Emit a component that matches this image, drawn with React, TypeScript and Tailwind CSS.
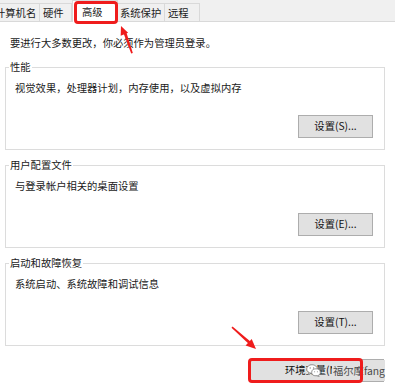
import React from "react";

const tabs = [
	{ label: "计算机名", cls: "ml-[-5px] w-[45px] pl-0" },
	{ label: "硬件", cls: "w-[32px] pl-[3px]" },
	{ label: "高级", cls: "w-[46px] pl-[9px]", active: true },
	{ label: "系统保护", cls: "w-[47px] pl-[2px]" },
	{ label: "远程", cls: "w-[35px] pl-[3px]" },
];

const WinButton = ({ children, className = "" }: { children: React.ReactNode; className?: string }) => (
	<button className={`h-[23px] border border-[#adadad] bg-[#e1e1e1] text-[10.3px] leading-none text-[#111] ${className}`}>
		{children}
	</button>
);

const GroupBox = ({
	title,
	desc,
	btn,
	className = "",
}: {
	title: string;
	desc: string;
	btn: string;
	className?: string;
}) => (
	<fieldset className={`min-w-0 border border-[#dcdcdc] px-[3px] ${className}`}>
		<legend className="px-[1px] leading-[14px]">{title}</legend>
		<div className="pl-[6px] pr-[8px] pb-[11px]">
			<p className="mt-[7px] leading-[14px]">{desc}</p>
			<div className="mt-[20px] flex justify-end">
				<WinButton className="w-[75px]">{btn}</WinButton>
			</div>
		</div>
	</fieldset>
);

const WechatIcon = () => (
	<svg width="15" height="13" viewBox="0 0 15 13">
		<ellipse cx="6" cy="5" rx="5.3" ry="4.3" fill="#fff" stroke="#8a8a8a" strokeWidth="0.9" />
		<path d="M3 8.4 L2.2 10.6 L5 9.1" fill="#fff" stroke="#8a8a8a" strokeWidth="0.8" />
		<ellipse cx="10" cy="8.3" rx="4.3" ry="3.5" fill="#fff" stroke="#8a8a8a" strokeWidth="0.9" />
		<path d="M12.2 11.2 L13.2 12.6 L10.8 11.7" fill="#fff" stroke="#8a8a8a" strokeWidth="0.8" />
		<circle cx="4.2" cy="4" r="0.7" fill="#8a8a8a" />
		<circle cx="7.6" cy="4" r="0.7" fill="#8a8a8a" />
		<circle cx="8.6" cy="7.8" r="0.55" fill="#8a8a8a" />
		<circle cx="11.4" cy="7.8" r="0.55" fill="#8a8a8a" />
	</svg>
);

export default function App() {
	return (
		<div className="relative h-[390px] w-[395px] overflow-hidden bg-white font-['Noto_Sans_CJK_SC','Noto_Sans',sans-serif] text-[10.3px] text-[#1a1a1a]">
			{/* Tab strip */}
			<div className="flex h-[22px] items-end border-b border-[#d9d9d9] bg-[#f0f0f0]">
				{tabs.map((t) =>
					t.active ? (
						<div
							key={t.label}
							className={`relative -mb-px flex h-[22px] items-center border-x border-t border-[#d9d9d9] bg-white ${t.cls}`}
						>
							{t.label}
							<div className="absolute left-[1px] top-0 h-[23px] w-[44px] rounded-[4px] border-[3px] border-[#ef1c1c]" />
						</div>
					) : (
						<div
							key={t.label}
							className={`flex h-[18px] items-center whitespace-nowrap border-r border-t border-[#d9d9d9] ${t.cls}`}
						>
							{t.label}
						</div>
					),
				)}
			</div>

			{/* Page content */}
			<div className="flex flex-col pl-[5px] pr-[10px]">
				<p className="mt-[14px] pl-[5px] leading-[14px]">
					要进行大多数更改，你必须作为管理员登录。
				</p>

				<GroupBox
					className="mt-[10px]"
					title="性能"
					desc="视觉效果，处理器计划，内存使用，以及虚拟内存"
					btn="设置(S)..."
				/>
				<GroupBox
					className="mt-[8px]"
					title="用户配置文件"
					desc="与登录帐户相关的桌面设置"
					btn="设置(E)..."
				/>
				<GroupBox
					className="mt-[8px]"
					title="启动和故障恢复"
					desc="系统启动、系统故障和调试信息"
					btn="设置(T)..."
				/>

				<div className="mt-[13px] flex justify-end pr-[1px]">
					<div className="relative">
						<WinButton className="w-[134px]">环境变量(N)...</WinButton>
						{/* watermark */}
						<div className="absolute left-[56px] top-[5px] flex items-center">
							<WechatIcon />
						</div>
						<div className="absolute left-[82px] top-[1px] h-[21px] whitespace-nowrap bg-[#e1e1e1] pl-[1px] text-[10.3px] leading-[21px] text-[#4a4a4a]">
							福尔摩fang
						</div>
						<div className="absolute left-[-2px] top-[-1px] h-[25px] w-[115px] rounded-[4px] border-[3px] border-[#ef1c1c]" />
					</div>
				</div>
			</div>

			{/* annotation arrows */}
			<svg className="pointer-events-none absolute inset-0" width="395" height="390">
				<polygon points="132.8,53 131.2,53.6 123.6,33.6 126.4,32.4" fill="#ef1c1c" />
				<polygon points="121,26 128.1,32.8 120.7,35.8" fill="#ef1c1c" />
				<polygon points="232.5,326.5 231.5,327.7 248.6,343.8 250.4,341.6" fill="#ef1c1c" />
				<polygon points="256,349 245.6,345.6 251.7,339" fill="#ef1c1c" />
			</svg>
		</div>
	);
}
